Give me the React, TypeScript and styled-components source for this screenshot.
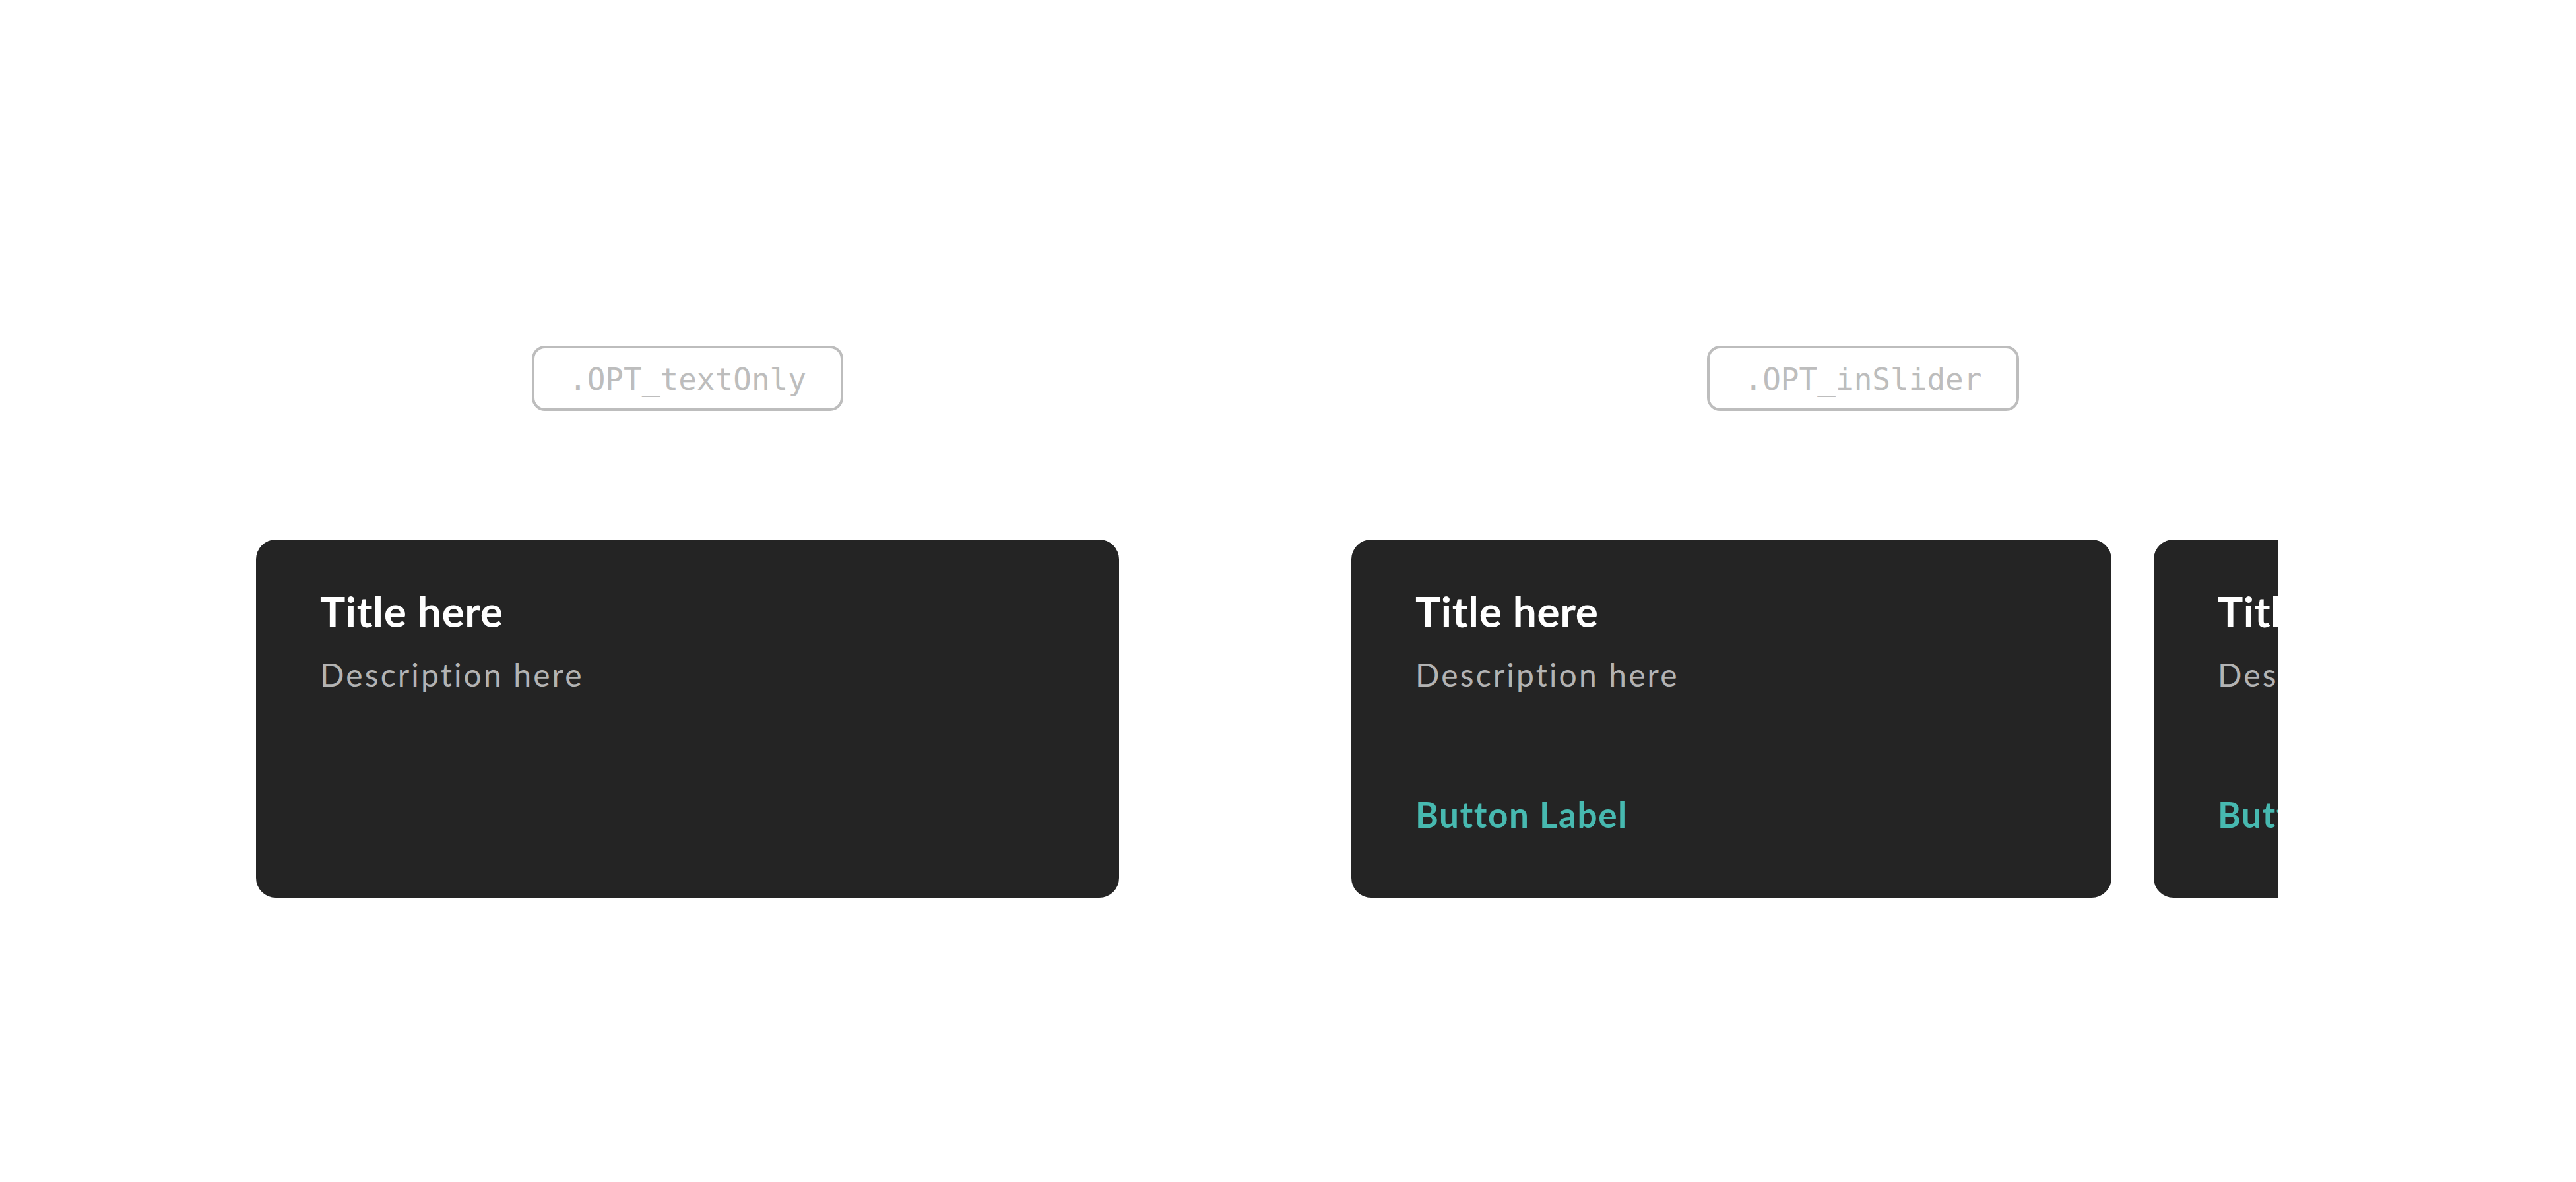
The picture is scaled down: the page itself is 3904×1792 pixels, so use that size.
import { createGlobalStyle, styled } from 'styled-components';

const GlobalStyle = createGlobalStyle`
  html, body {
    margin: 0;
    padding: 0;
    background: #ffffff;
  }
  #root {
    min-height: 1792px;
  }
`;

const StyledPage = styled.div`
  display: flex;
  align-items: flex-start;
  gap: 352px;
  padding: 524px 0 0 388px;
  font-family: Lato, 'Noto Sans', sans-serif;
`;

const StyledColumn = styled.section<{ $width: number }>`
  display: flex;
  flex-direction: column;
  align-items: center;
  gap: 195px;
  width: ${({ $width }) => $width}px;
`;

const StyledTag = styled.div`
  box-sizing: border-box;
  height: 99px;
  padding: 20px 52px 15px;
  border: 4px solid #bdbdbd;
  border-radius: 20px;
  color: #bdbdbd;
  font-family: 'DejaVu Sans Mono', 'Liberation Mono', monospace;
  font-size: 46px;
  line-height: 1.2;
  white-space: nowrap;
`;

const StyledSlider = styled.div`
  align-self: flex-start;
  display: flex;
  gap: 64px;
  width: 1404px;
  overflow: hidden;
`;

const StyledCard = styled.article<{ $width: number }>`
  box-sizing: border-box;
  display: flex;
  flex-direction: column;
  flex-shrink: 0;
  width: ${({ $width }) => $width}px;
  height: 543px;
  padding: 71px 96px 94px 97px;
  border-radius: 30px;
  background: #242424;
`;

const StyledTitle = styled.h3`
  margin: 0;
  color: #ffffff;
  font-size: 64px;
  font-weight: 700;
  line-height: 1.2;
  letter-spacing: 0.01em;
  white-space: nowrap;
`;

const StyledDescription = styled.p`
  margin: 28px 0 0;
  color: #b3b3b3;
  font-size: 48px;
  font-weight: 400;
  line-height: 1.2;
  letter-spacing: 0.065em;
  white-space: nowrap;
`;

const StyledButton = styled.button`
  margin-top: auto;
  align-self: flex-start;
  padding: 0;
  border: none;
  background: none;
  color: #47b9b0;
  font-family: inherit;
  font-size: 53px;
  font-weight: 700;
  line-height: 1.2;
  letter-spacing: 0.03em;
  white-space: nowrap;
  cursor: pointer;
`;

type CardProps = {
  width: number;
  withButton?: boolean;
};

const Card = ({ width, withButton }: CardProps) => (
  <StyledCard $width={width}>
    <StyledTitle>Title here</StyledTitle>
    <StyledDescription>Description here</StyledDescription>
    {withButton && <StyledButton>Button Label</StyledButton>}
  </StyledCard>
);

export default function App() {
  return (
    <>
      <GlobalStyle />
      <StyledPage>
        <StyledColumn $width={1308}>
          <StyledTag>.OPT_textOnly</StyledTag>
          <Card width={1308} />
        </StyledColumn>
        <StyledColumn $width={1551}>
          <StyledTag>.OPT_inSlider</StyledTag>
          <StyledSlider>
            <Card width={1152} withButton />
            <Card width={1152} withButton />
          </StyledSlider>
        </StyledColumn>
      </StyledPage>
    </>
  );
}
